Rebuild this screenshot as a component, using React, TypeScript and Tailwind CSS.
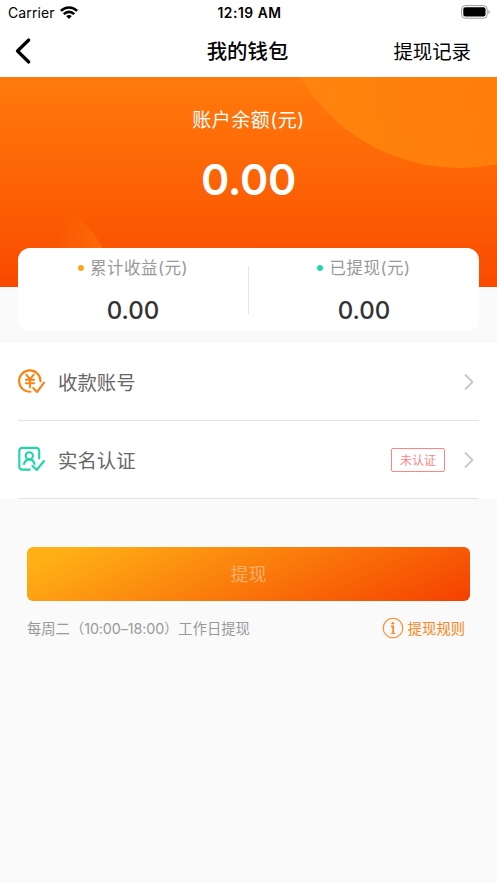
import type { ReactNode } from 'react'

interface StatProps {
  label: string
  value: string
  dotClass: string
}

interface RowProps {
  icon: ReactNode
  label: string
  badge?: string
}

function WifiIcon() {
  return (
    <svg width="18" height="13" viewBox="0 0 18 13" fill="none" stroke="#000" strokeWidth="2.6">
      <path d="M0.9 4.9C5.4 0.3 12.6 0.3 17.1 4.9" />
      <path d="M3.8 8.1C6.8 5.1 11.2 5.1 14.2 8.1" />
      <path d="M9 12.9L6.2 10.1C7.8 8.7 10.2 8.7 11.8 10.1Z" fill="#000" stroke="none" />
    </svg>
  )
}

function BatteryIcon() {
  return (
    <svg className="-mt-px" width="30" height="14" viewBox="0 0 30 14" fill="none">
      <rect x="0.6" y="0.6" width="25.6" height="12.6" rx="3.6" stroke="#9b9b9b" strokeWidth="1" />
      <rect x="2.3" y="2.3" width="22.2" height="9.2" rx="2" fill="#000" />
      <path d="M27.5 4.9C29.2 5.4 29.2 8.4 27.5 8.9Z" fill="#9b9b9b" />
    </svg>
  )
}

function AccountIcon() {
  return (
    <svg className="-mt-[2px]" width="28" height="26" viewBox="0 0 28 26" fill="none" stroke="#ff8010" strokeWidth="2.1" strokeLinecap="round" strokeLinejoin="round">
      <path d="M22.5 13.2A10.7 10.7 0 1 0 12.4 23.8" />
      <path d="M8.2 6.6L12 11.2L15.8 6.6M7.9 11.8H16.1M7.9 15.3H16.1M12 11.2V19.4" strokeWidth="1.9" />
      <path d="M15.2 20.1L19 24L26 14.7" />
    </svg>
  )
}

function IdentityIcon() {
  return (
    <svg className="-mt-[2px]" width="28" height="26" viewBox="0 0 28 26" fill="none" stroke="#20d5aa" strokeWidth="2.1" strokeLinecap="round" strokeLinejoin="round">
      <path d="M21.2 12.4V5Q21.2 1.9 18.1 1.9H4.4Q1.3 1.9 1.3 5V20.5Q1.3 23.6 4.4 23.6H11.8" />
      <circle cx="11.3" cy="9.8" r="3.6" />
      <path d="M6 18Q7.4 13.4 11.3 13.4Q15.2 13.4 16.6 18" />
      <path d="M14.4 19.8L18.7 24L26 15" />
    </svg>
  )
}

function ChevronIcon() {
  return (
    <svg width="10" height="18" viewBox="0 0 10 18" fill="none" stroke="#c7c7c7" strokeWidth="1.8">
      <path d="M1 1.5L8.5 9L1 16.5" />
    </svg>
  )
}

function InfoIcon() {
  return (
    <svg width="22" height="22" viewBox="0 0 22 22" fill="none">
      <circle cx="11" cy="11" r="9.8" stroke="#ff8420" strokeWidth="1.1" />
      <circle cx="10.8" cy="6.3" r="1.3" fill="#ff8420" />
      <path d="M9 9.3H11.2V16.4" stroke="#ff8420" strokeWidth="1.7" />
      <path d="M9 16.6H13.2" stroke="#ff8420" strokeWidth="1" />
    </svg>
  )
}

function HeroCircles() {
  return (
    <svg className="absolute inset-0" width="497" height="210" viewBox="0 0 497 210">
      <defs>
        <linearGradient id="big" x1="300" y1="40" x2="497" y2="0" gradientUnits="userSpaceOnUse">
          <stop offset="0" stopColor="#ff840e" />
          <stop offset="1" stopColor="#ff7d0b" />
        </linearGradient>
        <linearGradient id="small" x1="58" y1="150" x2="108" y2="166" gradientUnits="userSpaceOnUse">
          <stop offset="0" stopColor="#ff7a10" stopOpacity="0" />
          <stop offset="1" stopColor="#ff7a10" stopOpacity="0.6" />
        </linearGradient>
      </defs>
      <circle cx="460" cy="-95" r="186" fill="url(#big)" />
      <circle cx="14" cy="219" r="101" fill="url(#small)" />
    </svg>
  )
}

function Stat({ label, value, dotClass }: StatProps) {
  return (
    <div className="flex flex-1 flex-col items-center pt-px">
      <div className="flex items-center gap-[6px]">
        <span className={`size-[6px] rounded-full ${dotClass}`} />
        <span className="text-[16.5px] leading-[26px] tracking-[0.5px] text-[#999]">{label}</span>
      </div>
      <div className="mt-[15px] text-[24px] leading-[30px] font-medium text-[#333]">{value}</div>
    </div>
  )
}

function Row({ icon, label, badge }: RowProps) {
  return (
    <div className="mx-[18px] flex h-[78px] items-center border-b border-[#e3e3e3]">
      {icon}
      <span className="ml-3 flex-1 pt-[5px] text-[19.4px] text-[#666]">{label}</span>
      {badge && (
        <span className="mr-[19px] flex h-6 w-[54px] items-center justify-center rounded-[2px] border border-[#ff8585] pt-[2px] text-[12px] text-[#ff8585]">
          {badge}
        </span>
      )}
      <span className="mr-[5px]">
        <ChevronIcon />
      </span>
    </div>
  )
}

export default function App() {
  return (
    <div className="h-[883px] w-[497px] overflow-hidden bg-[#fafafa] font-[Inter,'Noto_Sans_CJK_SC',sans-serif]">
      {/* Status bar */}
      <div className="grid h-[25px] grid-cols-3 items-center bg-white pr-[6px] pl-2 text-[14px] text-black">
        <div className="flex items-center gap-[5px]">
          <span className="tracking-[0.1px]">Carrier</span>
          <WifiIcon />
        </div>
        <div className="pt-px text-center text-[13.8px] font-semibold tracking-[0.55px]">12:19 AM</div>
        <div className="flex justify-end">
          <BatteryIcon />
        </div>
      </div>

      {/* Nav bar */}
      <div className="grid h-[52px] grid-cols-[1fr_auto_1fr] items-center bg-white pr-[26px] pl-[15px] text-black">
        <svg width="17" height="26" viewBox="0 0 17 26" fill="none" stroke="#000" strokeWidth="3.2" strokeLinecap="round" strokeLinejoin="round">
          <path d="M13.7 2L2.5 13L13.7 24" />
        </svg>
        <h1 className="mr-px ml-[10px] pt-[2px] text-[20.4px] font-medium">我的钱包</h1>
        <span className="pt-[3px] text-right text-[19.4px]">提现记录</span>
      </div>

      {/* Balance */}
      <div className="relative h-[210px] bg-linear-to-b from-[#ff7a0c] to-[#f94900] text-center text-white">
        <HeroCircles />
        <div className="relative pt-[29px] text-[19px] leading-[30px] tracking-[0.5px]">账户余额(元)</div>
        <div className="relative mt-[17px] text-[43px] leading-[52px] font-semibold tracking-[-0.3px]">0.00</div>
      </div>

      <div className="relative mx-[18px] -mt-[39px] flex h-[83px] items-center rounded-[12px] bg-white">
        <Stat label="累计收益(元)" value="0.00" dotClass="bg-[#faa51e]" />
        <div className="h-12 w-px bg-[#e8e8e8]" />
        <Stat label="已提现(元)" value="0.00" dotClass="bg-[#20d5aa]" />
      </div>

      {/* Menu */}
      <div className="mt-[12px] bg-white">
        <Row icon={<AccountIcon />} label="收款账号" />
        <Row icon={<IdentityIcon />} label="实名认证" badge="未认证" />
      </div>

      <div className="mt-12 px-[27px]">
        <button className="h-[54px] w-full rounded-[6px] bg-linear-[155deg] from-[#ffb015] from-8% to-[#f54000] text-[18px] text-white/40">
          提现
        </button>
        <div className="mt-[16px] flex items-center justify-between pr-[5px] text-[14.3px]">
          <span className="pt-px text-[#999]">
            每周二（<span className="tracking-[-0.1px]">10:00–18:00</span>）工作日提现
          </span>
          <span className="flex items-center gap-1 text-[#ff8420]">
            <InfoIcon />
            <span className="pt-px">提现规则</span>
          </span>
        </div>
      </div>
    </div>
  )
}
